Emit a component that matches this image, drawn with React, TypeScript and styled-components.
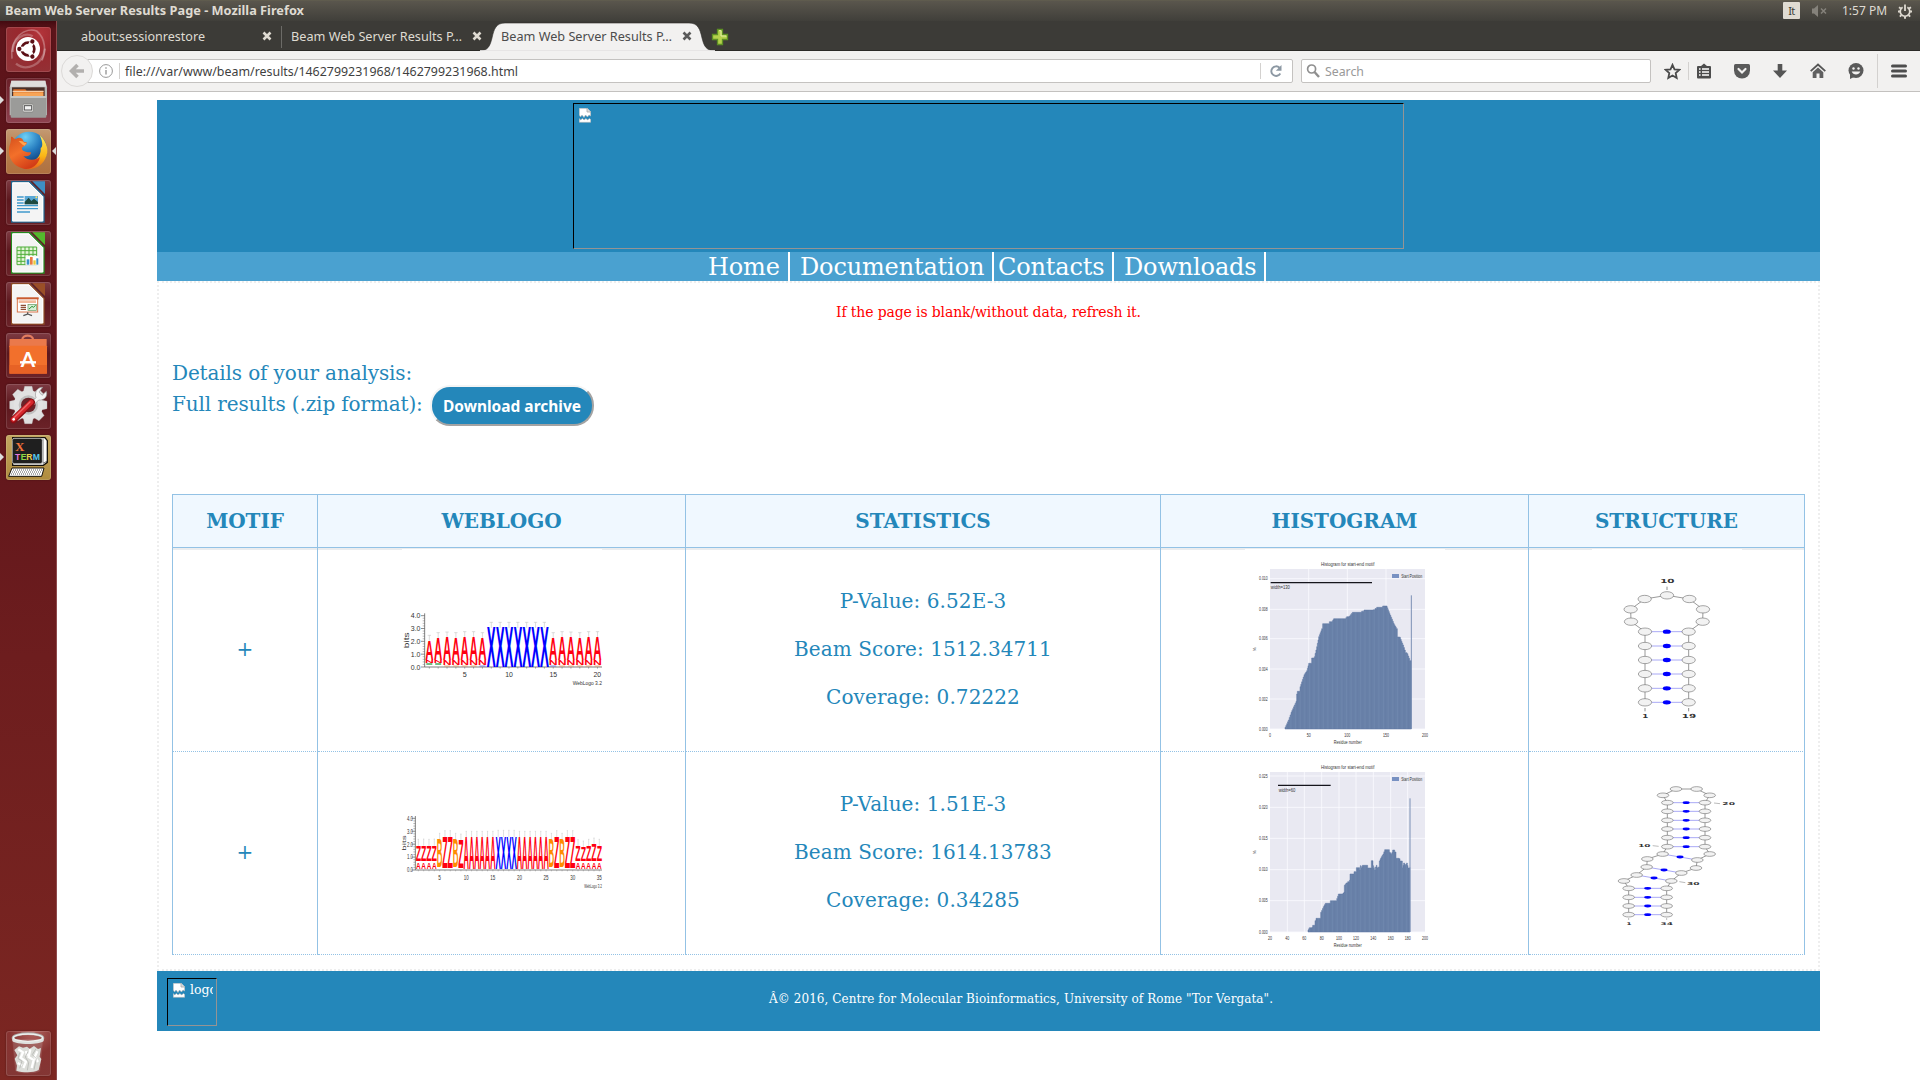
import React from 'react';
import styled, { createGlobalStyle, css } from 'styled-components';

const UI_FONT = '"Noto Sans", "Open Sans", sans-serif';
const SERIF = '"DejaVu Serif", serif';
const BLUE = '#2487ba';
const LINE = '#93c2e5';

const Global = createGlobalStyle`
  * { box-sizing: border-box; }
  html, body { margin: 0; padding: 0; background: #fff; }
  body { width: 1920px; height: 1080px; overflow: hidden; }
  svg { display: block; flex: none; }
`;

const Desktop = styled.div`
  width: 1920px;
  height: 1080px;
  display: flex;
  flex-direction: column;
  font-family: ${UI_FONT};
`;

/* ---------- system panel ---------- */
const Panel = styled.header`
  height: 21px;
  flex: none;
  display: flex;
  align-items: center;
  padding: 0 8px 0 5px;
  background: linear-gradient(#64614f 0, #5a564d 1px, #403f3a 100%);
  color: #dfdbd2;
`;
const FitText = styled.div<{ $w: number }>`
  width: ${p => p.$w}px;
  flex: none;
  white-space: nowrap;
`;
const PanelTitle = styled(FitText)`
  padding-bottom: 2px;
`;
const Indicators = styled.div`
  margin-left: auto;
  display: flex;
  align-items: center;
`;
const LangBadge = styled.span`
  width: 17px;
  height: 17px;
  margin-right: 11px;
  border-radius: 1px;
  background: #dfdbd2;
  color: #3c3b37;
  font-size: 11px;
  letter-spacing: -0.5px;
  line-height: 17px;
  text-align: center;
`;
const Clock = styled(FitText)`
  margin: 0 11px 0 15px;
  padding-bottom: 1px;
`;

/* ---------- launcher ---------- */
const Body = styled.div`
  display: flex;
  flex: 1;
  min-height: 0;
`;
const Launcher = styled.nav`
  width: 57px;
  flex: none;
  display: flex;
  flex-direction: column;
  gap: 6px;
  padding: 6px 5px 4px 6px;
  border-right: 1px solid #8f4a4c;
  background: linear-gradient(#430a10 0, #5d141a 8px, #5f151b 35%, #6d1d1e 60%, #7c2722 100%);
`;
const Tile = styled.div<{ $bg?: string; $last?: boolean }>`
  position: relative;
  width: 45px;
  height: 45px;
  flex: none;
  margin-top: ${p => (p.$last ? 'auto' : '0')};
  border-radius: 3px;
  background: ${p => p.$bg || 'linear-gradient(#7d3a42, #5c171d 45%, #6b2329)'};
  box-shadow: inset 0 0 0 1px rgba(255, 255, 255, 0.13), 0 0 2px rgba(0, 0, 0, 0.35);
`;
const Pip = styled.i<{ $right?: boolean }>`
  position: absolute;
  top: 18px;
  border: 4px solid transparent;
  ${p => p.$right
    ? css`right: -5px; border-left: 0; border-right-color: #ddd;`
    : css`left: -6px; border-right: 0; border-left-color: #ddd;`}
`;

/* ---------- browser chrome ---------- */
const Browser = styled.section`
  flex: 1;
  min-width: 0;
  display: flex;
  flex-direction: column;
`;
const TabStrip = styled.div`
  height: 30px;
  flex: none;
  display: flex;
  background: #3c3b37;
  border-bottom: 1px solid #2b2a27;
`;
const Tab = styled.div<{ $w: number; $pad: number }>`
  position: relative;
  width: ${p => p.$w}px;
  height: 30px;
  flex: none;
  display: flex;
  align-items: center;
  padding-left: ${p => p.$pad}px;
`;
const TabShape = styled.svg`
  position: absolute;
  left: -14px;
  top: 0;
`;
const TabLabel = styled(FitText)`
  position: relative;
`;
const TabClose = styled.svg<{ $ml: number }>`
  position: relative;
  margin-left: ${p => p.$ml}px;
`;
const NewTab = styled.svg`
  margin-left: 7px;
`;
const TabRule = styled.span`
  width: 1px;
  height: 22px;
  margin-top: 5px;
  background: #6c6b67;
`;
const Toolbar = styled.div`
  height: 41px;
  flex: none;
  display: flex;
  align-items: center;
  border-bottom: 1px solid #c3c1bf;
  background: #f2f1f0;
  padding: 0 13px 0 4px;
`;
const BackButton = styled.span`
  position: relative;
  z-index: 1;
  width: 32px;
  height: 32px;
  flex: none;
  display: flex;
  align-items: center;
  justify-content: center;
  border: 1px solid #dcdad8;
  border-radius: 50%;
  background: #f2f1f0;
`;
const Field = styled.div<{ $w: number }>`
  width: ${p => p.$w}px;
  height: 24px;
  flex: none;
  display: flex;
  align-items: center;
  border: 1px solid #c4c2c0;
  border-radius: 2px;
  background: #fff;
`;
const UrlField = styled(Field)`
  margin-left: -7px;
  margin-right: 8px;
  padding-left: 12px;
`;
const SearchField = styled(Field)`
  padding-left: 4px;
  gap: 5px;
`;
const VRule = styled.span<{ $h: number; $ml: number; $mr: number }>`
  width: 1px;
  height: ${p => p.$h}px;
  flex: none;
  margin: 0 ${p => p.$mr}px 0 ${p => p.$ml}px;
  background: #d3d1cf;
`;
const ToolIcons = styled.div`
  display: flex;
  align-items: center;
  margin-left: auto;
`;
const ToolIcon = styled.svg<{ $ml?: number }>`
  margin-left: ${p => p.$ml || 0}px;
`;

/* ---------- web page ---------- */
const Page = styled.main`
  width: 1663px;
  margin: 8px 0 0 100px;
  flex: none;
  font-family: ${SERIF};
  color: ${BLUE};
`;
const Banner = styled.div`
  height: 152px;
  padding-top: 3px;
  display: flex;
  justify-content: center;
  background: ${BLUE};
`;
const MissingImage = styled.div<{ $w: number; $h: number }>`
  width: ${p => p.$w}px;
  height: ${p => p.$h}px;
  flex: none;
  display: flex;
  gap: 5px;
  padding: 4px 3px 0 5px;
  border: 1px solid;
  border-color: #000 #949494 #949494 #000;
  overflow: hidden;
`;
const AltText = styled.span`
  font-size: 12.5px;
  line-height: 14px;
  overflow: hidden;
  color: #fff;
`;
const Menu = styled.nav`
  height: 29px;
  display: flex;
  padding-left: 546px;
  background: #4aa1d0;
`;
const MenuItem = styled.a<{ $w: number; $pad: number }>`
  width: ${p => p.$w}px;
  padding-left: ${p => p.$pad}px;
  border-right: 2px solid #fff;
  color: #fff;
  font-size: 24px;
  letter-spacing: -0.15px;
  line-height: 30px;
  white-space: nowrap;
`;
const Content = styled.div`
  height: 690px;
  border: 2px dotted #eee;
  padding: 0 13px;
`;
const Notice = styled.p`
  margin: 19px 0 0;
  font-size: 14px;
  letter-spacing: -0.13px;
  line-height: 20px;
  text-align: center;
  color: #f00;
`;
const Details = styled.div`
  height: 172px;
  padding-top: 35px;
  font-size: 20px;
  letter-spacing: -0.13px;
`;
const DetailLine = styled.div`
  height: 31px;
  display: flex;
  align-items: center;
  gap: 7px;
  line-height: 30px;
`;
const Download = styled.button`
  width: 164px;
  height: 41px;
  margin-top: 4px;
  padding: 0;
  display: flex;
  align-items: center;
  justify-content: center;
  border: 2px solid;
  border-color: #f4f4f4 #a3a3a3 #a3a3a3 #f4f4f4;
  border-radius: 20px;
  background: ${BLUE};
`;
const Table = styled.div`
  display: grid;
  grid-template-columns: 146px 368px 475px 368px 276px;
  grid-template-rows: 54px 204px 203px;
`;
const HeadCell = styled.div`
  display: flex;
  align-items: center;
  justify-content: center;
  border-top: 1px solid ${LINE};
  border-bottom: 1px solid ${LINE};
  border-right: 1px solid ${LINE};
  background: #f0f8ff;
  box-shadow: 0 2px 0 #ebedef;
  font-size: 20px;
  font-weight: 700;
  letter-spacing: -0.05px;
  &:first-child { border-left: 1px solid ${LINE}; }
`;
const Cell = styled.div<{ $first?: boolean }>`
  display: flex;
  flex-direction: column;
  align-items: center;
  justify-content: center;
  border-right: 1px solid ${LINE};
  border-bottom: 1px dotted ${LINE};
  border-left: ${p => (p.$first ? `1px solid ${LINE}` : '0')};
  font-size: 20px;
`;
const Stats = styled.div`
  padding-bottom: 2px;
  text-align: center;
  letter-spacing: 0.08px;
`;
const Stat = styled.p`
  margin: 0 0 24px;
  line-height: 24px;
  &:last-child { margin-bottom: 0; }
`;
const Figure = styled.svg<{ $up?: boolean }>`
  margin-bottom: ${p => (p.$up ? 1 : 0)}px;
  overflow: visible;
  background: #fff;
  font-family: "Liberation Sans", Arial, sans-serif;
`;
const Footer = styled.footer`
  height: 60px;
  display: flex;
  padding: 7px 0 0 10px;
  background: ${BLUE};
  color: #fff;
`;
const Copyright = styled.span`
  margin-left: 552px;
  margin-top: 11px;
  font-size: 12px;
  letter-spacing: 0.077px;
  line-height: 20px;
  white-space: nowrap;
`;

/* ---------- small helpers ---------- */
type TxtProps = { x: number; y: number; w: number; s: number; children: string; fill?: string; bold?: boolean; rot?: boolean; family?: string };
const Txt = ({ x, y, w, s, children, fill = '#333', bold, rot, family }: TxtProps) => (
  <text x={x} y={y} fontSize={s} fill={fill} textAnchor="middle" textLength={w} lengthAdjust="spacingAndGlyphs"
    fontWeight={bold ? 700 : 400} fontFamily={family} transform={rot ? `rotate(-90 ${x} ${y})` : undefined}>{children}</text>
);

/* UI label squeezed or stretched to an exact run length */
const Label = ({ w, s, children, fill, bold, h = 18 }: { w: number; s: number; children: string; fill: string; bold?: boolean; h?: number }) => (
  <svg width={w} height={h} overflow="visible">
    <text x="0" y={h / 2 + s * 0.36} fontSize={s} fill={fill} fontWeight={bold ? 700 : 400} fontFamily='"Noto Sans"' letterSpacing="0"
      textLength={w} lengthAdjust="spacingAndGlyphs">{children}</text>
  </svg>
);

const BrokenIcon = () => (
  <svg width="12" height="15" viewBox="0 0 12 15">
    <path d="M.3 .3H8L11.700 4V8L10 7L8.500 9L6.500 7L5 9.500L3 7L1.500 9L.3 7Z" fill="#fff" stroke="#b5b5b5" strokeWidth=".6" />
    <path d="M8 0V4H12" fill="#ddd" stroke="#a8a8a8" strokeWidth=".8" />
    <path d="M.3 10.500L1.500 12L3.500 10.500L5 12L7 10.500L8.500 12L10.500 10.500L11.700 11.500V14.300H.3Z" fill="#fff" stroke="#b5b5b5" strokeWidth=".6" />
  </svg>
);

const Close = ({ fill, ml }: { fill: string; ml: number }) => (
  <TabClose width="10" height="10" viewBox="0 0 10 10" $ml={ml}>
    <path d="M1.500 1.500L8.500 8.500M8.500 1.500L1.500 8.500" stroke={fill} strokeWidth="2.6" />
  </TabClose>
);

/* ---------- launcher icons, drawn on a 135-unit tile ---------- */
const IconBox = ({ children }: { children: React.ReactNode }) => (
  <svg width="45" height="45" viewBox="0 0 135 135">{children}</svg>
);
const Dash = () => (
  <IconBox>
    <path d="M18 95C10 30 60 0 92 12C120 35 120 75 108 100" fill="none" stroke="#fff" strokeOpacity=".3" strokeWidth="5" />
    <path d="M30 110C60 135 110 115 117 65M20 75C20 30 60 15 80 28" fill="none" stroke="#fff" strokeOpacity=".25" strokeWidth="7" />
    <circle cx="66" cy="66" r="36" fill="#fff" />
    <circle cx="66" cy="66" r="19" fill="none" stroke="#5c1016" strokeWidth="8" />
    {[180, 60, -60].map(a => (
      <g key={a} transform={`rotate(${a} 66 66)`}>
        <path d="M78 66H96" stroke="#fff" strokeWidth="14" />
        <circle cx="92" cy="66" r="6.5" fill="#5c1016" />
      </g>
    ))}
  </IconBox>
);
const Files = () => (
  <IconBox>
    <path d="M16 8H118L123 28V112H11V28Z" fill="#b9b9b7" />
    <path d="M16 8H118L121 26H13Z" fill="#dededc" />
    <rect x="18" y="28" width="98" height="34" fill="#4a3029" />
    <path d="M22 34H58L62 38H112V60H22Z" fill="#d96a26" />
    <path d="M22 43H112V60H22Z" fill="#f7a457" />
    <path d="M20 40H113" stroke="#fbe3c5" strokeWidth="3" />
    <rect x="14" y="54" width="107" height="65" rx="3" fill="#9b9b99" />
    <path d="M14 57H121" stroke="#d5d5d3" strokeWidth="4" />
    <rect x="50" y="78" width="32" height="24" rx="4" fill="#e4e4e2" stroke="#787876" strokeWidth="2" />
    <rect x="55" y="83" width="22" height="13" fill="#f4f4f4" stroke="#555" strokeWidth="3" />
  </IconBox>
);
const Fox = () => (
  <IconBox>
    <defs>
      <radialGradient id="globe" cx=".4" cy=".15" r=".85"><stop offset="0" stopColor="#6fd0f5" /><stop offset=".5" stopColor="#2379bd" /><stop offset="1" stopColor="#0b2c63" /></radialGradient>
      <linearGradient id="fox" x1="0" y1="0" x2=".6" y2="1"><stop offset="0" stopColor="#d5501c" /><stop offset=".5" stopColor="#f3702a" /><stop offset="1" stopColor="#d23c17" /></linearGradient>
      <linearGradient id="tail" x1="0" y1="0" x2="0" y2="1"><stop offset="0" stopColor="#ffe95c" /><stop offset=".6" stopColor="#fbb716" /><stop offset="1" stopColor="#e8641b" /></linearGradient>
    </defs>
    <circle cx="69" cy="62" r="54" fill="url(#globe)" />
    <path d="M101 19C122 36 132 66 117 91C105 115 76 125 55 119L60 100C90 100 106 80 104 58C110 54 112 42 101 19Z" fill="url(#tail)" />
    <path d="M15 24C20 20 22 31 30 30C40 22 51 28 53 38L62 40C64 48 54 51 48 56C46 66 60 70 75 70C76 81 60 84 52 81C66 98 92 93 102 84C96 112 72 123 53 119C23 113 6 88 9 61C10 47 16 42 15 24Z" fill="url(#fox)" />
    <path d="M38 37C47 34 52 38 54 41L62 42L56 50C48 49 45 41 38 37Z" fill="#ffa550" />
  </IconBox>
);
const Doc = ({ edge, fold, children }: { edge: string; fold: string; children: React.ReactNode }) => (
  <IconBox>
    <path d="M17 5H70L114 49V126H17Z" fill="#f4f4f4" stroke={edge} strokeWidth="4" />
    <path d="M20 9H69L110 50V123H20Z" fill="none" stroke="#fff" strokeWidth="3" />
    <path d="M76 4H117V43L106 37Z" fill={fold} />
    <path d="M76 4L117 45" stroke="#5a2329" strokeWidth="4" />
    {children}
  </IconBox>
);
const Writer = () => (
  <Doc edge="#21638c" fold="#3e8fc4">
    <path d="M33 51H53M33 60H53M33 69H53M33 77H96M33 86H96M33 96H72" stroke="#4099cc" strokeWidth="4" />
    <rect x="56" y="48" width="40" height="25" fill="#59a8d6" /><path d="M56 73V66L68 53L76 63L84 56L96 66V73Z" fill="#1d4940" /><circle cx="91" cy="52" r="3" fill="#ffe063" />
  </Doc>
);
const Calc = () => (
  <Doc edge="#258a20" fold="#54b82d">
    <rect x="33" y="48" width="59" height="53" fill="#e3f4d7" />
    <path d="M33 48H92M33 59H92M33 70H92M33 80H92M33 91H92M33 101H92M33 48V101M45 48V101M57 48V101M69 48V101M81 48V101M92 48V101" stroke="#4cae38" strokeWidth="3" />
    <rect x="59" y="75" width="40" height="28" fill="#fff" stroke="#ddd" /><rect x="62" y="85" width="8" height="16" fill="#3b91ca" /><rect x="72" y="78" width="8" height="23" fill="#e97a41" /><rect x="82" y="88" width="7" height="13" fill="#e9c938" /><rect x="91" y="82" width="6" height="19" fill="#3b91ca" />
  </Doc>
);
const Impress = () => (
  <Doc edge="#8c4a25" fold="#9a4f27">
    <rect x="34" y="49" width="61" height="41" fill="#fff" stroke="#d8754a" strokeWidth="3" /><rect x="32" y="46" width="66" height="6" fill="#c95b31" />
    <rect x="38" y="55" width="52" height="8" fill="#f2b99c" /><path d="M44 70H60M44 76H60M44 82H60" stroke="#8e4f36" strokeWidth="4" /><rect x="66" y="67" width="25" height="18" fill="#d6eed5" stroke="#65965f" strokeWidth="2" /><path d="M69 81L78 73L82 76L89 70" stroke="#2e9137" strokeWidth="3" fill="none" />
    <path d="M65 91V96L52 101M65 96L78 101" stroke="#555" strokeWidth="4" fill="none" />
  </Doc>
);
const Software = () => (
  <IconBox>
    <path d="M49 38V20C49 4 81 4 81 20V38" fill="none" stroke="#e27c5f" strokeWidth="7" />
    <path d="M11 18H122V42H10Z" fill="#ea794b" /><rect x="10" y="38" width="113" height="84" rx="2" fill="#f2702c" /><path d="M10 96H123V122H10Z" fill="#e25c22" opacity=".7" />
    <text x="66" y="103" fontSize="62" fontWeight="700" textAnchor="middle" fill="#fff" fontFamily="Lato">A</text>
    <path d="M42 88H90" stroke="#fff" strokeWidth="7" />
  </IconBox>
);
const Settings = () => (
  <IconBox>
    <g fill="#dedede" stroke="#bdbdbd" strokeWidth="1">
      {[0, 45, 90, 135, 180, 225, 270, 315].map(a => <path key={a} d="M52 24L56 7H78L82 24Z" transform={`rotate(${a} 67 63)`} />)}
    </g>
    <circle cx="67" cy="63" r="44" fill="#e2e2e2" /><circle cx="67" cy="63" r="29" fill="#c0c0c0" /><circle cx="67" cy="63" r="22" fill="#6b2329" />
    <path d="M75 56L90 41C84 26 94 9 110 10L99 24L108 34L121 22C126 38 114 50 98 48L84 62Z" fill="#f3f3f3" stroke="#999" strokeWidth="2" />
    <path d="M22 108L77 55" stroke="#8e0f14" strokeWidth="20" strokeLinecap="round" /><path d="M22 106L76 54" stroke="#d6262c" strokeWidth="14" strokeLinecap="round" /><path d="M24 101L72 54" stroke="#ee6a69" strokeWidth="4" strokeLinecap="round" /><circle cx="23" cy="106" r="4" fill="#fff" />
  </IconBox>
);
const Xterm = () => (
  <IconBox>
    <path d="M20 8H117L124 17V82L112 91H20Z" fill="#fff" stroke="#15110a" strokeWidth="4" />
    <path d="M111 12V85L124 78" fill="none" stroke="#333" strokeWidth="2" />
    <rect x="19" y="10" width="90" height="76" rx="6" fill="#1f1f1f" stroke="#ddd" strokeWidth="2" />
    <text x="28" y="47" fontSize="38" fontFamily="Liberation Serif" fontWeight="700" fill="#f2733c">X</text>
    <g fontSize="26" fontFamily="Liberation Sans" fontWeight="700"><text x="27" y="76" fill="#e678dd">T</text><text x="44" y="76" fill="#8bd945">E</text><text x="61" y="76" fill="#e8d14b">R</text><text x="80" y="76" fill="#55c8ed">M</text></g>
    <path d="M18 99H114L107 124H8Z" fill="#fff" stroke="#15110a" strokeWidth="3" /><path d="M21 105H108M18 111H106M15 117H104" stroke="#555" strokeWidth="3" strokeDasharray="3 3" />
  </IconBox>
);
const Trash = () => (
  <IconBox>
    <path d="M20 25L29 120C45 128 87 128 101 120L110 25Z" fill="#c9c9c9" opacity=".22" stroke="#d9aaaa" strokeWidth="2" />
    <path d="M25 57L39 46L51 50L63 47L71 53L84 45L96 54L105 51L101 77L106 84L98 117C82 126 50 125 31 119L33 104L26 83L34 73Z" fill="#dcddd9" />
    <path d="M37 55L51 64L44 80L60 92L52 111M73 55L68 78L83 87L77 111M94 61L86 78L96 93M35 96L48 103M60 60L63 74" fill="none" stroke="#fff" strokeWidth="7" /><path d="M41 65L36 83L48 90L41 112M66 62L58 78L68 95L64 118M90 53L79 71L91 83L84 116" fill="none" stroke="#b7b8b4" strokeWidth="2.5" />
    <ellipse cx="66" cy="21" rx="45" ry="13" fill="none" stroke="#aeb0ae" strokeWidth="8" /><path d="M19 21V30C30 42 102 42 113 30V21C98 36 35 36 19 21Z" fill="#dfe0de" /><ellipse cx="66" cy="20" rx="44" ry="11" fill="none" stroke="#f0f0ee" strokeWidth="4" />
  </IconBox>
);

/* ---------- sequence logos ---------- */
type GlyphProps = { c: string; x: number; top: number; bottom: number; w: number; fill: string };
/* inked width of each letter in em */
const INK: Record<string, number> = { A: 0.70, X: 0.65, Z: 0.56, B: 0.62, N: 0.6 };
const Glyph = ({ c, x, top, bottom, w, fill }: GlyphProps) => (
  <text textAnchor="middle" fontSize="10" fontWeight="700" fill={fill}
    transform={`translate(${x} ${bottom}) scale(${w / (INK[c] * 10)} ${(bottom - top) / 6.88})`}>{c}</text>
);
const RED = '#ff0010', INDIGO = '#0000ff', ORANGE = '#ff8c00';

const LogoAxis = ({ x, top, bottom, narrow }: { x: number; top: number; bottom: number; narrow?: boolean }) => (
  <g stroke="#555" strokeWidth="2">
    <path d={`M${x} ${top - 7}V${bottom}H666`} fill="none" stroke="#666" strokeWidth="2.5" />
    {Array.from({ length: 21 }, (_, i) => {
      const y = bottom - (i * (bottom - top)) / 20;
      return <path key={i} d={`M${x - (i % 5 ? 6 : 11)} ${y}H${x}`} strokeWidth={i % 5 ? 1.2 : 2} />;
    })}
    <g stroke="none">
      {[0, 1, 2, 3, 4].map(i => (
        <Txt key={i} x={narrow ? 90 : 107} y={bottom - (i * (bottom - top)) / 4 + (narrow ? 7 : 8)} w={narrow ? 18 : 29} s={narrow ? 19 : 23}>{`${i}.0`}</Txt>
      ))}
    </g>
  </g>
);
const LogoOne = () => (
  <Figure $up width="200" height="200" viewBox="66 -93 600 600">
    <LogoAxis x={134} top={107} bottom={261} />
    <Txt x={86} y={181} w={47} s={23} rot>bits</Txt>
    {Array.from({ length: 20 }, (_, i) => {
      const x = 148 + i * 26.55;
      const isX = i >= 7 && i <= 13;
      const top = [182, 174, 172, 174, 171, 171, 174, 0, 0, 0, 0, 0, 0, 0, 174, 171, 172, 174, 171, 171][i];
      return (
        <g key={i}>
          <path d={`M${x} ${isX ? 127 : top - 16}V${isX ? 144 : top}M${x - 5} ${isX ? 127 : top - 16}H${x + 5}`} stroke="#b8b8b8" strokeWidth="1.5" />
          {isX
            ? <Glyph c="X" x={x} top={144} bottom={261} w={26} fill={INDIGO} />
            : <>
              <Glyph c="A" x={x} top={top} bottom={239} w={24} fill={RED} />
              <Glyph c="N" x={x} top={240} bottom={i < 2 ? 249 : 256} w={22} fill={RED} />
              <path d={`M${x - 9} ${i < 2 ? 252 : 258}H${x + 9}`} stroke={i < 2 ? '#2c9c43' : i === 6 || i === 14 ? '#3c50e0' : '#e98b4a'} strokeWidth={i < 2 ? 4 : 2} />
            </>}
          <path d={`M${x} 261V266`} stroke="#666" strokeWidth="1.5" />
        </g>
      );
    })}
    <Txt x={254} y={292} w={12} s={22}>5</Txt><Txt x={387} y={292} w={23} s={22}>10</Txt><Txt x={520} y={292} w={23} s={22}>15</Txt><Txt x={652} y={292} w={23} s={22}>20</Txt>
    <Txt x={622} y={315} w={88} s={18}>WebLogo 3.2</Txt>
  </Figure>
);
const SEQ2 = 'ZZZZBZZBZAAAAAAXXXXAAAAAABZBZZZZZZZ';
const LogoTwo = () => (
  <Figure width="200" height="200" viewBox="66 519 600 600">
    <LogoAxis x={106} top={715} bottom={870} narrow />
    <Txt x={77} y={789} w={46} s={16} rot>bits</Txt>
    {SEQ2.split('').map((c, i) => {
      const x = 115 + i * 15.97;
      const tail = i < 4 || i > 29;
      const fill = c === 'B' ? ORANGE : c === 'X' ? INDIGO : RED;
      const top = tail ? [798, 797, 798, 797][i] ?? [799, 803, 798, 794, 798][i - 30]
        : c === 'B' ? 780 : c === 'X' ? 771 : c === 'A' ? 774 : i === 8 ? 782 : 772;
      const whisk = top - 20;
      return (
        <g key={i}>
          <path d={`M${x} ${whisk}V${top}M${x - 2} ${whisk}H${x + 2}`} stroke="#c2c2c2" strokeWidth="1.5" />
          <Glyph c={c} x={x} top={top} bottom={tail ? 843 : c === 'B' ? 862 : c === 'Z' ? 864 : 868} w={c === 'Z' || c === 'B' ? 14.8 : 15.6} fill={fill} />
          {tail && <Glyph c="A" x={x} top={847} bottom={866} w={13.5} fill={RED} />}
          <path d={`M${x} 870V874`} stroke="#777" strokeWidth="1.2" />
        </g>
      );
    })}
    {[5, 10, 15, 20, 25, 30, 35].map(n => <Txt key={n} x={115 + (n - 1) * 15.97} y={899} w={n === 5 ? 8 : 15} s={21}>{`${n}`}</Txt>)}
    <Txt x={639} y={923} w={53} s={17}>WebLogo 3.2</Txt>
  </Figure>
);

/* ---------- histograms ---------- */
type HistProps = {
  vy: number; top: number; bottom: number; xs: number[]; xl: string[]; ys: number[]; yl: string[];
  shape: string; id: string; spikeTop: number; spikeX: number; bar: [number, number, number]; width: string; widthX: number; up?: boolean;
};
const Hist = (p: HistProps) => (
  <Figure $up={p.up} width="200" height="200" viewBox={`75 ${p.vy} 600 600`}>
    <defs>
      <pattern id={p.id} width="13.9" height="10" patternUnits="userSpaceOnUse"><rect width="13.9" height="10" fill="#6880a8" /><path d="M4 0V10" stroke="#7088ae" strokeWidth="2" /><path d="M9 0V10" stroke="#627aa3" strokeWidth="1.5" /></pattern>
    </defs>
    <rect x="150" y={p.top} width="465" height={p.bottom - p.top} fill="#e9e9f2" />
    <path d={p.xs.slice(1, -1).map(x => `M${x} ${p.top}V${p.bottom}`).join('') + p.ys.map(y => `M150 ${y}H615`).join('')} stroke="#fafaff" strokeWidth="2.5" />
    <path d={p.shape} fill={`url(#${p.id})`} stroke="#5c76a3" strokeWidth="1.5" />
    <path d={`M${p.spikeX} ${p.spikeTop}V${p.bottom}`} stroke="#7b90b5" strokeWidth="3" />
    <path d={`M${p.bar[0]} ${p.bar[2]}H${p.bar[1]}`} stroke="#15151c" strokeWidth="4" />
    <Txt x={p.widthX} y={p.bar[2] + 19} w={p.width.length > 8 ? 57 : 50} s={17}>{p.width}</Txt>
    <Txt x={383} y={p.top - 8} w={160} s={18}>Histogram for start-end motif</Txt>
    <rect x="516" y={p.top + 15} width="21" height="12" fill="#7891c2" />
    <Txt x={575} y={p.top + 26} w={63} s={16}>Start Position</Txt>
    {p.xs.map((x, i) => <Txt key={x} x={x} y={p.bottom + 23} w={p.xl[i].length * 6} s={15}>{p.xl[i]}</Txt>)}
    {p.ys.map((y, i) => <Txt key={y} x={130} y={y + 5} w={26} s={15}>{p.yl[i]}</Txt>)}
    <Txt x={383} y={p.bottom + 46} w={84} s={17}>Residue number</Txt>
    <Txt x={109} y={p.bottom - 239} w={12} s={12} rot>%</Txt>
  </Figure>
);
/* turns corner points into a stepped outline */
const steps = (pts: [number, number][], base: number) => {
  let d = `M${pts[0][0]} ${base}V${pts[0][1]}`;
  for (let i = 1; i < pts.length; i++) {
    const [x0, y0] = pts[i - 1], [x1, y1] = pts[i];
    const n = Math.max(1, Math.min(Math.round((x1 - x0) / 2.4), Math.ceil(Math.abs(y1 - y0) / 4)));
    for (let k = 1; k <= n; k++) d += `H${(x0 + ((x1 - x0) * k) / n).toFixed(1)}V${(y0 + ((y1 - y0) * k) / n).toFixed(1)}`;
  }
  return `${d}V${base}Z`;
};
const SHAPE1 = steps([[195, 562], [205, 540], [213, 517], [228, 484], [230, 462], [232, 454], [238, 454], [240, 440], [252, 404], [260, 392], [266, 370], [272, 370], [275, 354], [283, 350], [290, 320], [296, 290], [305, 266], [308, 251], [325, 251], [328, 245], [335, 245], [341, 236], [375, 236], [380, 230], [388, 228], [397, 217], [418, 217], [432, 210], [460, 209], [470, 202], [486, 202], [488, 198], [499, 198], [510, 226], [520, 250], [529, 266], [532, 291], [539, 292], [548, 315], [556, 338], [561, 341], [569, 362], [574, 362]], 567);
const SHAPE2 = steps([[264, 555], [268, 548], [276, 547], [278, 541], [283, 541], [285, 527], [288, 520], [300, 520], [302, 502], [310, 485], [316, 475], [330, 475], [331, 467], [348, 467], [355, 447], [366, 447], [372, 441], [373, 421], [378, 414], [388, 406], [390, 387], [400, 387], [402, 380], [408, 380], [409, 368], [418, 368], [419, 374], [421, 362], [423, 368], [427, 361], [440, 361], [443, 369], [452, 369], [454, 347], [457, 347], [459, 362], [463, 374], [466, 366], [469, 361], [471, 368], [475, 366], [478, 348], [484, 335], [489, 327], [494, 314], [506, 314], [508, 322], [514, 328], [518, 315], [521, 315], [524, 321], [527, 321], [528, 340], [537, 341], [540, 348], [545, 348], [547, 368], [551, 354], [556, 361], [560, 354], [564, 369], [570, 368]], 561);

/* ---------- secondary structures ---------- */
type P = [number, number];
type StructureProps = { vy: number; pts: P[]; pairs: [number, number][]; rx: number; ry: number; up?: boolean; children: React.ReactNode };
const Structure = ({ vy, pts, pairs, rx, ry, up, children }: StructureProps) => (
  <Figure $up={up} width="150" height="200" viewBox={`36 ${vy} 450 600`}>
    <path d={'M' + pts.map(q => q.join(' ')).join('L')} fill="none" stroke="#666" strokeWidth="2" />
    {pairs.map(([a, b]) => (
      <g key={a}>
        <path d={`M${pts[a]}L${pts[b]}`} stroke="#7d7df0" strokeWidth="2" />
        <ellipse cx={(pts[a][0] + pts[b][0]) / 2} cy={(pts[a][1] + pts[b][1]) / 2} rx={rx * 0.6} ry={ry * 0.6} fill="#00f" />
      </g>
    ))}
    {pts.map((q, i) => <ellipse key={i} cx={q[0]} cy={q[1]} rx={rx} ry={ry} fill="#f2f2f2" stroke="#6b6b6b" strokeWidth="1.8" />)}
    {children}
  </Figure>
);
const S1: P[] = [[195, 487], [195, 445], [195, 402], [195, 360], [195, 318], [195, 275], [153, 245], [152, 208], [194, 177], [261, 166], [328, 177], [369, 208], [368, 245], [326, 275], [326, 318], [326, 360], [326, 402], [326, 445], [326, 487]];
const S2: P[] = [[146, 509], [146, 483], [146, 457], [146, 430], [132, 408], [170, 390], [200, 366], [202, 342], [248, 327], [262, 305], [262, 278], [262, 252], [262, 226], [262, 199], [262, 173], [249, 151], [288, 132], [350, 132], [389, 151], [375, 173], [375, 199], [375, 226], [375, 252], [375, 278], [375, 305], [389, 327], [352, 345], [348, 369], [304, 384], [274, 408], [260, 430], [260, 457], [260, 483], [260, 509]];
const SL = 'DejaVu Sans';

const App = () => (
  <>
    <Global />
    <Desktop>
      <Panel>
        <PanelTitle $w={299}><Label w={299} s={12.5} fill="#dfdbd2" bold>Beam Web Server Results Page - Mozilla Firefox</Label></PanelTitle>
        <Indicators>
          <LangBadge>It</LangBadge>
          <svg width="16" height="14" viewBox="0 0 16 14"><path d="M1 4.500H3L7 1V13L3 9.500H1Z" fill="#85827b" /><path d="M10 4.500L15 9.500M15 4.500L10 9.500" stroke="#85827b" strokeWidth="1.5" /></svg>
          <Clock $w={45}><Label w={45} s={12.5} fill="#dfdbd2">1:57 PM</Label></Clock>
          <svg width="14" height="16" viewBox="0 0 14 16">
            <g stroke="#dfdbd2" fill="none">
              <path d="M4.600 4.300A4.800 4.800 0 1 0 9.400 4.300" strokeWidth="1.7" />
              <path d="M7 1.500V8" strokeWidth="1.8" />
              {[55, 90, 135, 180, 225, 270, 305].map(a => <path key={a} d="M7 3.400V1.200" strokeWidth="1.9" transform={`rotate(${a} 7 8.500)`} />)}
            </g>
          </svg>
        </Indicators>
      </Panel>
      <Body>
        <Launcher>
          <Tile $bg="radial-gradient(circle at 75% 15%, #b3343a, #99282e 40%, #8f363a)"><Dash /></Tile>
          <Tile $bg="linear-gradient(#6a2029, #7b2c37 50%, #8e4350)"><Pip /><Files /></Tile>
          <Tile $bg="linear-gradient(#c39a73, #b87f4d 45%, #ae7040)"><Pip /><Fox /><Pip $right /></Tile>
          <Tile><Writer /></Tile>
          <Tile><Calc /></Tile>
          <Tile><Impress /></Tile>
          <Tile><Software /></Tile>
          <Tile><Settings /></Tile>
          <Tile $bg="linear-gradient(#c3a661, #b08c3e)"><Pip /><Xterm /></Tile>
          <Tile $last $bg="radial-gradient(circle at 60% 0, #b26460, #873331 45%, #823735)"><Trash /></Tile>
        </Launcher>
        <Browser>
          <TabStrip>
            <Tab $w={224} $pad={24}>
              <TabLabel $w={124}><Label w={124} s={12.5} fill="#dfdbd2">about:sessionrestore</Label></TabLabel>
              <Close fill="#dfdbd2" ml={57} />
            </Tab>
            <TabRule />
            <Tab $w={209} $pad={9}>
              <TabLabel $w={171}><Label w={171} s={12.5} fill="#dfdbd2">Beam Web Server Results P…</Label></TabLabel>
              <Close fill="#dfdbd2" ml={10} />
            </Tab>
            <Tab $w={213} $pad={10}>
              <TabShape width="242" height="30" viewBox="477 21 242 30">
                <path d="M479 51C488 51 490 46 492 38C494 29 496 23 505 23H689C698 23 700 29 702 38C704 46 706 51 716 51Z" fill="#f2f1f0" stroke="#2b2a27" strokeWidth=".6" />
                <path d="M480 50.700H715" stroke="#f2f1f0" strokeWidth="1" />
              </TabShape>
              <TabLabel $w={171}><Label w={171} s={12.5} fill="#4c4c4c">Beam Web Server Results P…</Label></TabLabel>
              <Close fill="#5a5a5a" ml={10} />
            </Tab>
            <NewTab width="18" height="30" viewBox="0 0 18 30"><path d="M6.500 8.500H11.500V13.500H16.500V18.500H11.500V23.500H6.500V18.500H1.500V13.500H6.500Z" fill="#b5d14c" stroke="#5d8f24" strokeWidth="1.3" /><path d="M8 9.700H10V15H15V15.500" stroke="#e3efa5" fill="none" /></NewTab>
          </TabStrip>
          <Toolbar>
            <BackButton><svg width="16" height="16" viewBox="0 0 16 16"><path d="M8.500 2L2.500 8L8.500 14M3 8H15" fill="none" stroke="#b2b0ae" strokeWidth="3.6" /></svg></BackButton>
            <UrlField $w={1207}>
              <svg width="14" height="14" viewBox="0 0 14 14"><circle cx="7" cy="7" r="6.400" fill="none" stroke="#999" strokeWidth="1" /><path d="M7 6V10.500M7 3.200V4.800" stroke="#999" strokeWidth="1.4" /></svg>
              <VRule $h={16} $ml={6} $mr={5} />
              <Label w={393} s={12.5} fill="#3f3f3f">file:///var/www/beam/results/1462799231968/1462799231968.html</Label>
              <VRule $h={16} $ml={742} $mr={8} />
              <svg width="14" height="14" viewBox="0 0 14 14"><path d="M11.300 9.500A4.800 4.800 0 1 1 10.500 3.700" fill="none" stroke="#8c98a3" strokeWidth="1.9" /><path d="M12.500 1V6.800H6.800Z" fill="#8c98a3" /></svg>
            </UrlField>
            <SearchField $w={350}>
              <svg width="14" height="14" viewBox="0 0 14 14"><circle cx="5.600" cy="5" r="4" fill="none" stroke="#8f8f8f" strokeWidth="1.7" /><path d="M8.500 8L13 13" stroke="#8f8f8f" strokeWidth="2.4" /></svg>
              <Label w={39} s={12.5} fill="#999">Search</Label>
            </SearchField>
            <ToolIcons>
              <ToolIcon width="17" height="17" viewBox="0 0 17 17"><path d="M8.500 1.800L10.500 6.300L15.300 6.800L11.700 10.100L12.700 15L8.500 12.500L4.300 15L5.300 10.100L1.700 6.800L6.500 6.300Z" fill="none" stroke="#4a4a4a" strokeWidth="1.8" /></ToolIcon>
              <VRule $h={18} $ml={7} $mr={7} />
              <ToolIcon width="16" height="17" viewBox="0 0 16 17"><path d="M2 3H5L8 .5L11 3H14Q15 3 15 4V14.500Q15 15.500 14 15.500H2Q1 15.500 1 14.500V4Q1 3 2 3Z" fill="#4d4d4d" /><path d="M3 6H4.600M3 9H4.600M3 12H4.600M6 6H13M6 9H13M6 12H13" stroke="#fff" strokeWidth="1.6" /></ToolIcon>
              <ToolIcon $ml={22} width="16" height="15" viewBox="0 0 16 15"><path d="M1.500 0H14.500Q16 0 16 1.500V6.500A8 8 0 0 1 0 6.500V1.500Q0 0 1.500 0Z" fill="#5a5a5a" /><path d="M4.500 5L8 8.500L11.500 5" fill="none" stroke="#f2f1f0" strokeWidth="2.2" strokeLinecap="round" /></ToolIcon>
              <ToolIcon $ml={23} width="14" height="16" viewBox="0 0 14 16"><path d="M4.700 1H9.300V7.500H14L7 15L0 7.500H4.700Z" fill="#555" /></ToolIcon>
              <ToolIcon $ml={23} width="16" height="16" viewBox="0 0 16 16"><path d="M.7 8.200L8 1.500L15.300 8.200" fill="none" stroke="#555" strokeWidth="1.8" /><path d="M8 4.500L13.300 9.300V15H9.500V10.500H6.500V15H2.700V9.300Z" fill="#606060" /></ToolIcon>
              <ToolIcon $ml={22} width="16" height="16" viewBox="0 0 16 16"><circle cx="8" cy="7.500" r="7.500" fill="#5a5a5a" /><path d="M2 10V16L8 13Z" fill="#5a5a5a" /><circle cx="5.500" cy="5.500" r="1.200" fill="#f2f1f0" /><circle cx="10.500" cy="5.500" r="1.200" fill="#f2f1f0" /><path d="M3.700 8.500C5 12.500 11 12.500 12.300 8.500Z" fill="#f2f1f0" /></ToolIcon>
              <VRule $h={34} $ml={13} $mr={13} />
              <ToolIcon width="16" height="14" viewBox="0 0 16 14"><path d="M1.500 2H14.500M1.500 7H14.500M1.500 12H14.500" stroke="#4d4d4d" strokeWidth="3" strokeLinecap="round" /></ToolIcon>
            </ToolIcons>
          </Toolbar>
          <Page>
            <Banner><MissingImage $w={831} $h={146}><BrokenIcon /></MissingImage></Banner>
            <Menu>
              <MenuItem $w={87} $pad={5}>Home</MenuItem>
              <MenuItem $w={204} $pad={10}>Documentation</MenuItem>
              <MenuItem $w={120} $pad={4}>Contacts</MenuItem>
              <MenuItem $w={152} $pad={10}>Downloads</MenuItem>
            </Menu>
            <Content>
              <Notice>If the page is blank/without data, refresh it.</Notice>
              <Details>
                <DetailLine>Details of your analysis:</DetailLine>
                <DetailLine>Full results (.zip format): <Download><Label w={138} s={15.5} fill="#fff" bold>Download archive</Label></Download></DetailLine>
              </Details>
              <Table>
                <HeadCell>MOTIF</HeadCell><HeadCell>WEBLOGO</HeadCell><HeadCell>STATISTICS</HeadCell><HeadCell>HISTOGRAM</HeadCell><HeadCell>STRUCTURE</HeadCell>
                <Cell $first><Stats>+</Stats></Cell>
                <Cell><LogoOne /></Cell>
                <Cell><Stats><Stat>P-Value: 6.52E-3</Stat><Stat>Beam Score: 1512.34711</Stat><Stat>Coverage: 0.72222</Stat></Stats></Cell>
                <Cell>
                  <Hist up id="h1" vy={27} top={87} bottom={567} xs={[150, 266, 382, 498, 615]} xl={['0', '50', '100', '150', '200']}
                    ys={[116, 208, 296, 387, 477, 567]} yl={['0.010', '0.008', '0.006', '0.004', '0.002', '0.000']}
                    shape={SHAPE1} spikeTop={166} spikeX={574} bar={[152, 456, 128]} width="width=130" widthX={181} />
                </Cell>
                <Cell>
                  <Structure up vy={27} pts={S1} pairs={[[0, 18], [1, 17], [2, 16], [3, 15], [4, 14], [5, 13]]} rx={20} ry={11}>
                    <path d="M261 140V150M195 504V514M326 504V514" stroke="#555" strokeWidth="2" />
                    <Txt x={262} y={130} w={43} s={17} bold family={SL}>10</Txt><Txt x={196} y={535} w={18} s={17} bold family={SL}>1</Txt><Txt x={327} y={535} w={43} s={17} bold family={SL}>19</Txt>
                  </Structure>
                </Cell>
                <Cell $first><Stats>+</Stats></Cell>
                <Cell><LogoTwo /></Cell>
                <Cell><Stats><Stat>P-Value: 1.51E-3</Stat><Stat>Beam Score: 1614.13783</Stat><Stat>Coverage: 0.34285</Stat></Stats></Cell>
                <Cell>
                  <Hist id="h2" vy={24} top={81} bottom={561} xs={[150, 202, 253, 305, 357, 408, 460, 512, 563, 615]} xl={['20', '40', '60', '80', '100', '120', '140', '160', '180', '200']}
                    ys={[93, 187, 280, 374, 467, 561]} yl={['0.025', '0.020', '0.015', '0.010', '0.005', '0.000']}
                    shape={SHAPE2} spikeTop={160} spikeX={570} bar={[174, 332, 121]} width="width=60" widthX={201} />
                </Cell>
                <Cell>
                  <Structure vy={24} pts={S2} pairs={[[0, 33], [1, 32], [2, 31], [3, 30], [5, 29], [6, 28], [8, 26], [9, 24], [10, 23], [11, 22], [12, 21], [13, 20], [14, 19]]} rx={17.5} ry={7}>
                    <path d="M146 519V525M260 519V525M402 174L420 176M218 302L236 304M298 410L316 413" stroke="#777" strokeWidth="1.5" />
                    <Txt x={446} y={180} w={38} s={12} bold family={SL}>20</Txt><Txt x={193} y={306} w={37} s={12} bold family={SL}>10</Txt><Txt x={340} y={420} w={38} s={12} bold family={SL}>30</Txt>
                    <Txt x={147} y={539} w={15} s={11} bold family={SL}>1</Txt><Txt x={260} y={539} w={37} s={11} bold family={SL}>34</Txt>
                  </Structure>
                </Cell>
              </Table>
            </Content>
            <Footer>
              <MissingImage $w={50} $h={48}><BrokenIcon /><AltText>logo</AltText></MissingImage>
              <Copyright>Â© 2016, Centre for Molecular Bioinformatics, University of Rome "Tor Vergata".</Copyright>
            </Footer>
          </Page>
        </Browser>
      </Body>
    </Desktop>
  </>
);

export default App;
